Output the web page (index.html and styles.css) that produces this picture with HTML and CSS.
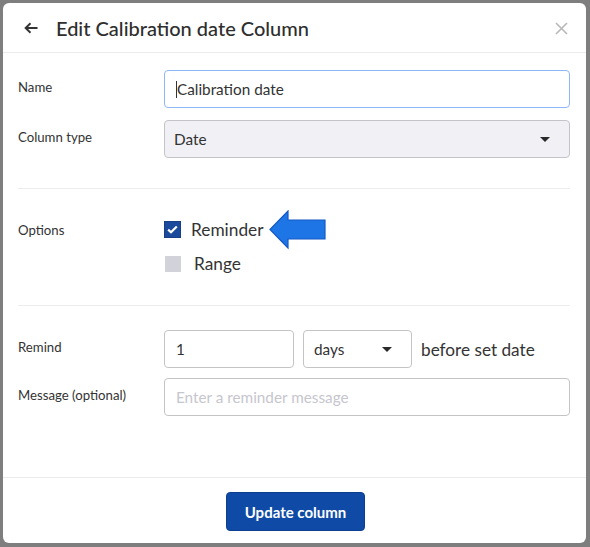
FILE: index.html
```html
<!DOCTYPE html>
<html>
<head>
<meta charset="utf-8">
<link rel="stylesheet" href="styles.css">
</head>
<body>
<div class="backdrop">
  <div class="modal">
    <div class="header">
      <svg class="back" width="14" height="12" viewBox="0 0 14 12"><path d="M13.5 6H2M6.5 1.2L1.6 6l4.9 4.8" fill="none" stroke="#333" stroke-width="1.9"/></svg>
      <h1 class="title">Edit Calibration date Column</h1>
      <svg class="close" width="13" height="13" viewBox="0 0 13 13"><path d="M1 1L12 12M12 1L1 12" stroke="#b8b8b8" stroke-width="1.6"/></svg>
    </div>
    <div class="body">
      <div class="section first">
        <div class="row">
          <div class="label">Name</div>
          <div class="input focus"><span class="caret"></span>Calibration date</div>
        </div>
        <div class="row">
          <div class="label">Column type</div>
          <div class="select grey"><span>Date</span><span class="tri"></span></div>
        </div>
      </div>
      <div class="sep"></div>
      <div class="section options">
        <div class="row top">
          <div class="label lbl-opt">Options</div>
          <div class="opts">
            <div class="opt">
              <span class="cb checked"><svg width="11" height="9" viewBox="0 0 11 9"><path d="M1.2 4.6L4 7.3 9.8 1.4" fill="none" stroke="#fff" stroke-width="2.2"/></svg></span>
              <span class="opt-text">Reminder</span>
              <svg class="pointer" width="58" height="40" viewBox="0 0 58 40"><polygon points="1,19.5 19,1 19,10 56,10 56,29 19,29 19,38" fill="#1e76e6" stroke="#1459c4" stroke-width="1.2"/></svg>
            </div>
            <div class="opt">
              <span class="cb off"></span>
              <span class="opt-text range">Range</span>
            </div>
          </div>
        </div>
      </div>
      <div class="sep"></div>
      <div class="section remind">
        <div class="row">
          <div class="label">Remind</div>
          <div class="inline">
            <div class="input num">1</div>
            <div class="select days"><span>days</span><span class="tri"></span></div>
            <span class="after">before set date</span>
          </div>
        </div>
        <div class="row">
          <div class="label">Message (optional)</div>
          <div class="input placeholder">Enter a reminder message</div>
        </div>
      </div>
    </div>
    <div class="footer">
      <button class="btn">Update column</button>
    </div>
  </div>
</div>
</body>
</html>
```
FILE: styles.css
```css
* { box-sizing: border-box; }
html, body { margin: 0; padding: 0; }
body {
  font-family: Lato, "Open Sans", "Liberation Sans", sans-serif;
  color: #333;
  background: #7e7e7e;
}
.backdrop {
  width: 590px;
  height: 547px;
  padding: 3px 4px 4px 3px;
}
.modal {
  width: 583px;
  height: 540px;
  background: #fff;
  border-radius: 6px;
  display: flex;
  flex-direction: column;
  overflow: hidden;
}
.header {
  height: 50px;
  border-bottom: 1px solid #ebebeb;
  display: flex;
  align-items: center;
  padding: 0 18px 0 21px;
}
.back { flex: none; margin-top: 1px; }
.title {
  margin: 0 0 0 18px;
  font-size: 20px;
  font-weight: 500;
  color: #2e2e2e;
  flex: 1;
}
.close { flex: none; margin-top: 2px; }
.body {
  flex: 1;
  padding: 0 16px 0 15px;
}
.section { display: flex; flex-direction: column; }
.first { padding-top: 17px; gap: 12px; }
.row {
  display: grid;
  grid-template-columns: 146px 1fr;
  align-items: center;
}
.row.top { align-items: start; }
.label {
  font-size: 13.2px;
  color: #333;
  padding-bottom: 4px;
}
.lbl-opt { padding-top: 1px; }
.input, .select {
  height: 38px;
  border: 1px solid #c4c4c4;
  border-radius: 4px;
  display: flex;
  align-items: center;
  padding: 0 11px;
  font-size: 15.3px;
  color: #333;
}
.input.focus { border-color: #8db8f7; }
.caret {
  display: inline-block;
  width: 1px;
  height: 17px;
  background: #333;
}
.select { justify-content: space-between; padding-right: 19px; padding-left: 9px; }
.select.grey { background: #f0f0f5; border-color: #c4c4c8; }
.tri {
  width: 0; height: 0;
  border-left: 5px solid transparent;
  border-right: 5px solid transparent;
  border-top: 5px solid #2a2a2a;
}
.sep {
  height: 1px;
  background: #ececec;
}
.first + .sep { margin-top: 30px; }
.options { padding-top: 32px; padding-bottom: 33px; }
.opts { display: flex; flex-direction: column; gap: 17px; }
.opt {
  position: relative;
  display: flex;
  align-items: center;
  height: 17px;
}
.cb {
  width: 17px; height: 17px;
  display: flex; align-items: center; justify-content: center;
  flex: none;
}
.cb.checked { background: #1b4a9c; border: 1px solid #163f86; }
.cb.off { background: #d2d2da; width: 16px; height: 16px; margin-left: 1px; }
.opt-text { font-size: 17.3px; color: #333; margin-left: 10px; }
.opt-text.range { margin-left: 13px; }
.pointer { position: absolute; left: 105px; top: -11px; }
.remind { padding-top: 24px; gap: 10px; }
.inline { display: flex; align-items: center; }
.num { width: 130px; }
.days { width: 109px; margin-left: 9px; padding-left: 10px; padding-right: 19px; }
.after { margin-left: 9px; font-size: 17.2px; color: #333; }
.placeholder { color: #c6c6ce; }
.footer {
  border-top: 1px solid #ebebeb;
  height: 66px;
  display: flex;
  justify-content: center;
  padding-top: 14px;
}
.btn {
  width: 139px;
  height: 39px;
  background: #0f4ba6;
  color: #fff;
  border: 1px solid #0c3f8f;
  border-radius: 4px;
  font-family: Lato, "Open Sans", sans-serif;
  font-size: 15px;
  font-weight: 700;
  margin-left: 2px;
}
```
